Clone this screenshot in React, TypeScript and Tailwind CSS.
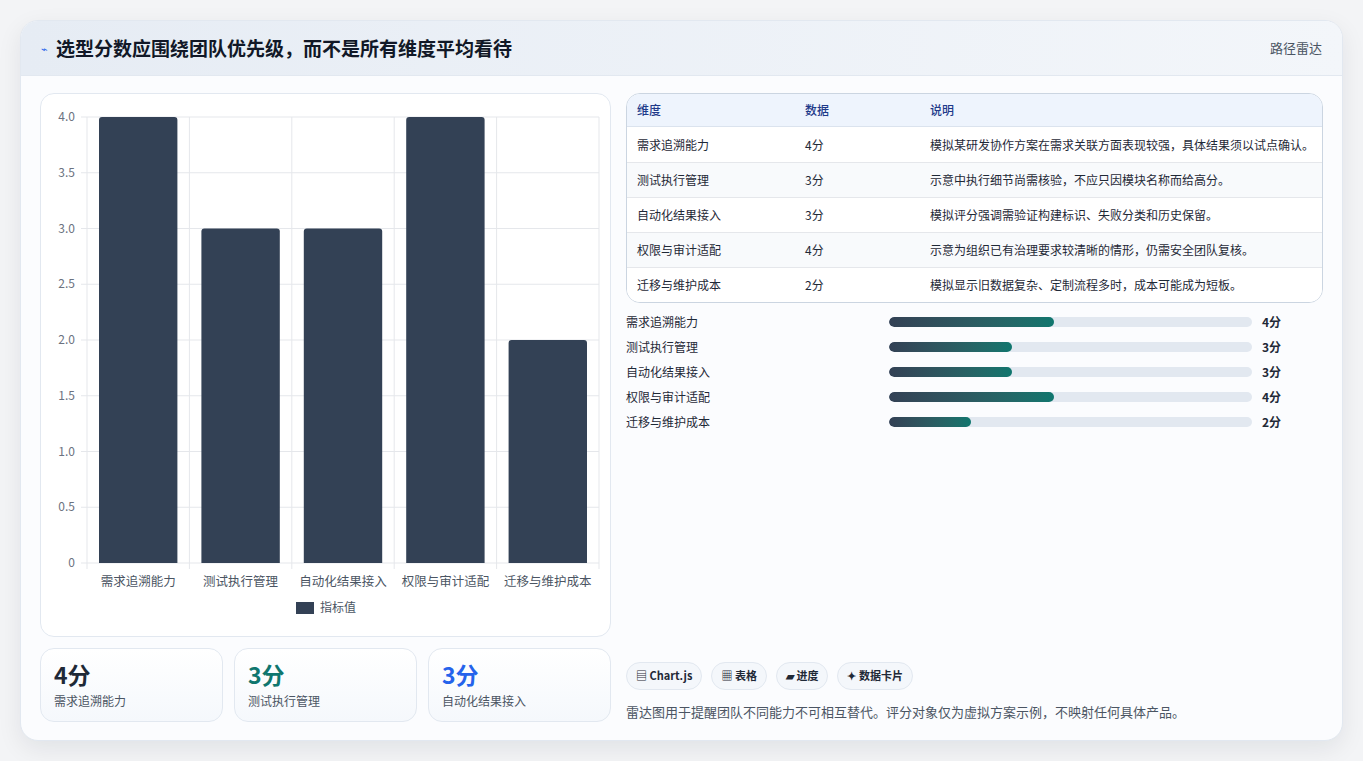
const FONT = { fontFamily: '"Noto Sans CJK SC", "Noto Sans", sans-serif' };

const rows = [
  { name: "需求追溯能力", score: 4, note: "模拟某研发协作方案在需求关联方面表现较强，具体结果须以试点确认。" },
  { name: "测试执行管理", score: 3, note: "示意中执行细节尚需核验，不应只因模块名称而给高分。" },
  { name: "自动化结果接入", score: 3, note: "模拟评分强调需验证构建标识、失败分类和历史保留。" },
  { name: "权限与审计适配", score: 4, note: "示意为组织已有治理要求较清晰的情形，仍需安全团队复核。" },
  { name: "迁移与维护成本", score: 2, note: "模拟显示旧数据复杂、定制流程多时，成本可能成为短板。" },
];

const barWidth: Record<number, string> = { 4: "45.5%", 3: "34%", 2: "22.5%" };

function BarChart() {
  // plot area in svg coords
  const left = 46, right = 558, top = 23, bottom = 469;
  const ticks = ["4.0", "3.5", "3.0", "2.5", "2.0", "1.5", "1.0", "0.5", "0"];
  const colW = (right - left) / 5;
  return (
    <svg width="570" height="543" viewBox="0 0 570 543" style={FONT}>
      {ticks.map((t, i) => {
        const y = top + ((bottom - top) / 8) * i;
        return (
          <g key={t}>
            <line x1={left - 6} x2={right} y1={y} y2={y} stroke="#e5e7eb" />
            <text x={left - 12} y={y + 4} textAnchor="end" fontSize="12" fill="#6b7280">{t}</text>
          </g>
        );
      })}
      {[0, 1, 2, 3, 4, 5].map((i) => (
        <line key={i} x1={left + colW * i} x2={left + colW * i} y1={top} y2={bottom + 6} stroke="#e5e7eb" />
      ))}
      {rows.map((r, i) => {
        const h = ((bottom - top) * r.score) / 4;
        const x = left + colW * i + 12;
        return (
          <g key={r.name}>
            <path d={`M${x} ${bottom} V${bottom - h + 3} Q${x} ${bottom - h} ${x + 3} ${bottom - h} H${x + colW - 27} Q${x + colW - 24} ${bottom - h} ${x + colW - 24} ${bottom - h + 3} V${bottom} Z`} fill="#334155" />
            <text x={left + colW * i + colW / 2} y={bottom + 23} textAnchor="middle" fontSize="12.5" fill="#4b5563">{r.name}</text>
          </g>
        );
      })}
      <rect x="255" y="508" width="18" height="12" fill="#334155" />
      <text x="279" y="518" fontSize="12" fill="#4b5563">指标值</text>
    </svg>
  );
}

export default function App() {
  return (
    <div className="min-h-screen bg-[#f3f4f6] p-5" style={FONT}>
      <div className="rounded-[18px] bg-[#fbfcfe] border border-[#e2e8f0] shadow-[0_8px_24px_rgba(15,23,42,0.08)] overflow-hidden h-[721px] flex flex-col">
        <div className="h-[55px] flex items-center justify-between px-5 bg-gradient-to-r from-[#e6ecf4] to-[#f3f6fa] border-b border-[#e2e8f0]">
          <div className="flex items-center gap-2">
            <span className="text-[#2563eb] text-[11px]">⌁</span>
            <h1 className="text-[19px] font-bold text-[#111827]">选型分数应围绕团队优先级，而不是所有维度平均看待</h1>
          </div>
          <span className="text-[13px] text-[#4b5563]">路径雷达</span>
        </div>
        <div className="flex gap-[15px] px-[19px] pt-[17px] flex-1">
          <div className="w-[571px] flex flex-col gap-[11px]">
            <div className="rounded-[14px] border border-[#e2e8f0] bg-white h-[544px]">
              <BarChart />
            </div>
            <div className="grid grid-cols-3 gap-[11px]">
              {[
                { v: "4分", c: "text-[#1f2937]", l: "需求追溯能力" },
                { v: "3分", c: "text-[#0f766e]", l: "测试执行管理" },
                { v: "3分", c: "text-[#2563eb]", l: "自动化结果接入" },
              ].map((s) => (
                <div key={s.l} className="h-[74px] rounded-[14px] border border-[#e2e8f0] bg-gradient-to-b from-white to-[#f5f8fc] px-[13px] pt-[10px]">
                  <div className={`text-[23px] leading-[30px] font-bold ${s.c}`}>{s.v}</div>
                  <div className="text-[12px] text-[#4b5563] mt-[3px]">{s.l}</div>
                </div>
              ))}
            </div>
          </div>
          <div className="flex-1 flex flex-col">
            <div className="rounded-[14px] border border-[#cbd5e1] overflow-hidden bg-white">
              <div className="flex h-[33px] items-center bg-[#eef4fd] text-[12px] text-[#1e3a8a] font-medium border-b border-[#dbe3ee]">
                <div className="w-[178px] pl-[10px]">维度</div>
                <div className="w-[125px]">数据</div>
                <div className="flex-1">说明</div>
              </div>
              {rows.map((r, i) => (
                <div key={r.name} className={`flex h-[35px] items-center text-[12px] text-[#1f2937] ${i > 0 ? "border-t border-[#e5e7eb]" : ""} ${i % 2 ? "bg-[#f8fafc]" : "bg-white"}`}>
                  <div className="w-[178px] pl-[10px]">{r.name}</div>
                  <div className="w-[125px]">{r.score}分</div>
                  <div className="flex-1">{r.note}</div>
                </div>
              ))}
            </div>
            <div className="mt-[10px] flex flex-col gap-[7px]">
              {rows.map((r) => (
                <div key={r.name} className="flex items-center h-[18px] text-[12px]">
                  <div className="w-[263px] text-[#1f2937]">{r.name}</div>
                  <div className="w-[363px] h-[10px] rounded-full bg-[#e2e8f0] overflow-hidden">
                    <div className="h-full rounded-full bg-gradient-to-r from-[#334155] to-[#0f766e]" style={{ width: barWidth[r.score] }} />
                  </div>
                  <div className="ml-[10px] font-bold text-[#1f2937]">{r.score}分</div>
                </div>
              ))}
            </div>
            <div className="mt-auto mb-[19px]">
              <div className="flex gap-[9px]">
                {["▤ Chart.js", "▦ 表格", "▰ 进度", "✦ 数据卡片"].map((c) => (
                  <span key={c} className="h-[28px] px-[9px] flex items-center rounded-full border border-[#e2e8f0] bg-[#f4f7fb] text-[11px] font-semibold text-[#1f2937]">{c}</span>
                ))}
              </div>
              <p className="mt-[12px] text-[13px] text-[#4b5563]">雷达图用于提醒团队不同能力不可相互替代。评分对象仅为虚拟方案示例，不映射任何具体产品。</p>
            </div>
          </div>
        </div>
      </div>
    </div>
  );
}
